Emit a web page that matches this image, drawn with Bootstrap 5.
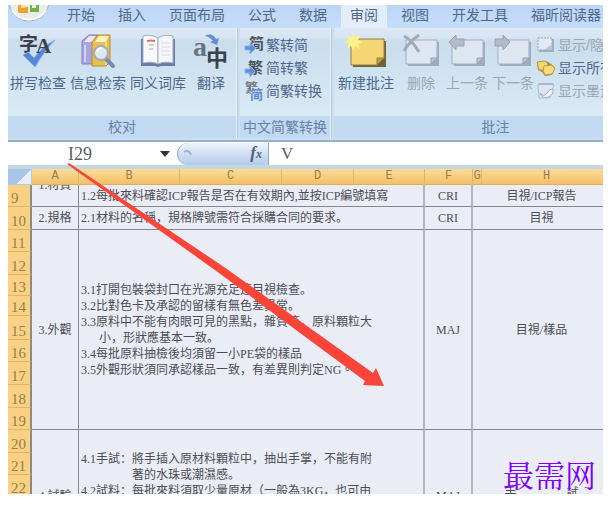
<!DOCTYPE html>
<html lang="zh-CN">
<head>
<meta charset="utf-8">
<meta name="viewport" content="width=device-width, initial-scale=1">
<title>审阅</title>
<link rel="stylesheet" href="https://cdn.jsdelivr.net/npm/bootstrap@5.3.0/dist/css/bootstrap.min.css">
<style>
body { background: #fff; font-family: "Liberation Sans", "Noto Sans CJK SC", sans-serif; font-size: 14px; line-height: 20px; color: #4d678f; }
.page-frame { height: 100vh; padding: 5px 12px 12px 8px; }
.tabbar { background: linear-gradient(#bdd6f5, #c6defa); height: 23px; gap: 5px; }
.tabbar .orb { width: 45px; height: 23px; }
.tabbar .ribbon-tab { color: #4d678f; padding: 0 9px; line-height: 21px; text-decoration: none; height: 23px; border-radius: 3px 3px 0 0; }
.tabbar .ribbon-tab.current { background: #e3eefa; }
.ribbon { background: #cbdff0; padding-bottom: 2px; border-bottom: 2px solid #94b0cf; gap: 3px; }
.tool-group { background: linear-gradient(#dfe9f5 0, #d6e4f2 10px, #c9dded 13px, #d9eaf5 88px); border-right: 1px solid #e9f3fb; box-shadow: 1px 0 0 #b2cae2; }
.tool-body { height: 88px; padding-top: 5px; }
.tool-title { background: #c2daf1; color: #6580a9; height: 22px; line-height: 22px; text-align: center; }
.g-proof { width: 229px; }
.g-convert { width: 91px; }
.g-note { width: 324px; }
.tool { border: 0; padding: 0; background: none; color: #4d678f; width: 60px; display: flex; flex-direction: column; align-items: center; gap: 3px; flex: none; }
.tool.w-s { width: 46px; }
.tool.w-xl { width: 64px; }
.tool-row { border: 0; padding: 0; background: none; color: #4d678f; height: 23px; display: flex; align-items: center; gap: 2px; }
.tool.off, .tool-row.off { color: #9ba6b2; }
.tool svg, .tool-row svg { flex: none; overflow: visible; }
.formula { background: #fff; height: 23px; border-bottom: 0; }
.formula input { border: 0; outline: 0; background: none; padding: 0; font: 18px/22px "Liberation Serif", serif; color: #5b5f66; min-width: 0; }
.formula .cell-name { width: 144px; text-align: center; }
.formula .cell-value { font-size: 17px; padding-left: 12px; }
.formula .drop { border: 0; padding: 0; background: none; width: 25px; line-height: 0; }
.fx { width: 92px; height: 22px; border: 0; border-left: 1px solid #90acd0; border-right: 1px solid #90a9cc; border-radius: 12px 0 0 12px; background: linear-gradient(#eef4fb, #b3cbea); color: #52627e; font: italic bold 17px/20px "Liberation Serif", serif; padding: 0 6px 0 3px; }
.fx small { font-size: 12px; }
.sheet-area { border-top: 4px solid #c3d7dd; background: #eaedf6; }
.sheet { table-layout: fixed; border-collapse: separate; border-spacing: 0; width: calc(100% + 9px); font: 12px/16px "Liberation Serif", "Noto Sans CJK TC", serif; color: #4c4e54; }
.sheet th, .sheet td { padding: 0; }
.c-no { width: 24px; } .c-a { width: 47px; } .c-b { width: 101px; } .c-c { width: 102px; } .c-d { width: 72px; } .c-e { width: 71px; } .c-f { width: 48px; } .c-g { width: 9px; }
.sheet thead th { height: 16px; font: 12px/15px "Liberation Mono", monospace; color: #96804c; text-align: center; background: linear-gradient(#fbdc9b, #f3c067); border-right: 1px solid #dfb566; border-bottom: 1px solid #dcae5c; }
.sheet thead th.corner { background: linear-gradient(135deg, #a9c5ea 62%, #e5eefa 62%); border-color: #b4c8e4; }
.sheet tbody th { background: #fad184; border-bottom: 1px solid #e3b467; border-right: 2px solid #8f8a7c; font: 15px/16px "Liberation Serif", serif; color: #96804c; vertical-align: bottom; padding-left: 3px; }
.h20 { height: 20px; } .h21 { height: 21px; } .h22 { height: 22px; } .h23 { height: 23px; } .h24 { height: 24px; }
.sheet td { background: #eaedf6; border-bottom: 1px solid #858890; border-right: 2px solid #b3b6c0; text-align: center; vertical-align: middle; }
.sheet td.name { border-right: 1px solid #8a8c94; }
.sheet td.body { text-align: left; padding-left: 2px; white-space: nowrap; }
.cut { height: 21px; overflow: hidden; }
.cut div { margin-top: -8px; }
.hang-s { padding-left: 18px; }
.hang-l { padding-left: 51px; }
.sheet td.from-top { vertical-align: top; padding-top: 21px; }
.sheet td.low { vertical-align: top; padding-top: 58px; }
.sheet td.mid { vertical-align: top; padding-top: 55px; }
.wide { gap: 50px; }
.pointer { position: absolute; left: 56px; top: 155px; pointer-events: none; }
.watermark { position: absolute; right: 7px; bottom: 3px; font: 31px/34px "Noto Serif CJK SC", "Noto Sans CJK SC", serif; color: #8000ff; }
</style>
</head>
<body>
<div class="page-frame">
<main class="position-relative d-flex flex-column h-100 overflow-hidden">
  <nav class="tabbar d-flex flex-nowrap text-nowrap overflow-hidden flex-shrink-0">
    <svg class="orb flex-shrink-0" viewBox="0 0 45 23" aria-hidden="true">
      <circle cx="21" cy="-4" r="20" fill="#e9eaec" stroke="#a3b0c2"/>
      <path d="M4 5A20 20 0 0 0 38 5" fill="none" stroke="#fff" stroke-width="2"/>
      <path d="M10-2v8q0 2 2 2h8v-6h-4v-4z" fill="#eda326"/><path d="M22-1h9v8h-9z" fill="#79b23e"/><path d="M24-1h4v4h-4z" fill="#f3f6ec"/><path d="M13-1h4v4h-4z" fill="#fbe09d"/>
    </svg>
    <a class="ribbon-tab" href="#">开始</a>
    <a class="ribbon-tab" href="#">插入</a>
    <a class="ribbon-tab" href="#">页面布局</a>
    <a class="ribbon-tab" href="#">公式</a>
    <a class="ribbon-tab" href="#">数据</a>
    <a class="ribbon-tab current" href="#" aria-current="page">审阅</a>
    <a class="ribbon-tab" href="#">视图</a>
    <a class="ribbon-tab" href="#">开发工具</a>
    <a class="ribbon-tab" href="#">福昕阅读器</a>
  </nav>

  <div class="ribbon d-flex flex-nowrap text-nowrap overflow-hidden flex-shrink-0">
    <section class="tool-group g-proof flex-shrink-0">
      <div class="tool-body d-flex">
        <button class="tool" type="button">
          <svg width="40" height="37" viewBox="0 0 40 37"><text x="1" y="18" font-size="19" font-weight="bold" fill="#3c4148" font-family="Noto Sans CJK SC">字</text><path d="M5 22l5-3 6 6Q24 14 37 7 27 17 17 34z" fill="#5387d8" stroke="#87abe6"/><text x="18" y="20" font-size="21" font-weight="bold" fill="#3c4148" font-family="Liberation Serif">A</text></svg>
          拼写检查</button>
        <button class="tool" type="button">
          <svg width="36" height="37" viewBox="0 0 36 37"><path d="M2 8l7-6h9l-5 7v22H2z" fill="#aaa4e0" stroke="#857fc2"/><path d="M4 9h8l4-6H9z" fill="#e8e7f8"/><path d="M5 12v17" stroke="#d6d2f5" stroke-width="2"/><path d="M12 9l6-7h12v27l-4 4H12z" fill="#e7c04f" stroke="#b58f2d"/><path d="M15 9h11l3-6H19z" fill="#faf0c4"/><path d="M26 9v23" stroke="#f7dd82" stroke-width="2"/><path d="M25 25l8 8" stroke="#7c89ad" stroke-width="4" stroke-linecap="round"/><circle cx="21" cy="20" r="7" fill="#dce9f2" stroke="#a5acb3" stroke-width="2"/><path d="M17 19q1-4 5-4" fill="none" stroke="#fff" stroke-width="2"/></svg>
          信息检索</button>
        <button class="tool" type="button">
          <svg width="36" height="37" viewBox="0 0 36 37"><path d="M1 6h34v27H21l-3 1-3-1H1z" fill="#697ba9"/><path d="M3 3q9-2 15 2v26q-6-3-15-1z" fill="#fafafa" stroke="#a4afc2"/><path d="M33 3q-9-2-15 2v26q6-3 15-1z" fill="#f4f5f8" stroke="#a4afc2"/><path d="M7 8q4-1 8 0" stroke="#dd736f" stroke-width="2" fill="none"/><path d="M9 12h5M9 16h4" stroke="#d99a98"/><path d="M21 10h9M21 14h9M21 18h9M21 22h9" stroke="#d8dce4"/></svg>
          同义词库</button>
        <button class="tool w-s" type="button">
          <svg width="38" height="37" viewBox="0 0 38 37"><text x="1" y="23" font-size="28" font-weight="bold" fill="#687483" font-family="Liberation Serif">a</text><text x="14" y="33" font-size="22" font-weight="bold" fill="#3d434b" font-family="Noto Sans CJK SC">中</text><path d="M13 3q7-4 11 3l3-1-2 7-7-3 3-1q-3-4-8-5z" fill="#628fd0"/></svg>
          翻译</button>
      </div>
      <div class="tool-title">校对</div>
    </section>

    <section class="tool-group g-convert flex-shrink-0">
      <div class="tool-body ps-1">
        <button class="tool-row" type="button"><svg width="20" height="20" viewBox="0 0 20 20"><text x="5" y="14" font-size="15" font-weight="bold" fill="#4e545c" font-family="Noto Sans CJK SC">简</text><path d="M1 11h5V8l6 5-6 6v-4H1z" fill="#5b8fdd" stroke="#8eb0e2"/></svg>繁转简</button>
        <button class="tool-row" type="button"><svg width="20" height="20" viewBox="0 0 20 20"><text x="4" y="15" font-size="15" font-weight="bold" fill="#4e545c" font-family="Noto Sans CJK SC">繁</text><path d="M1 11h5V8l5 5-5 6v-4H1z" fill="#5b8fdd" stroke="#8eb0e2"/></svg>简转繁</button>
        <button class="tool-row" type="button"><svg width="20" height="20" viewBox="0 0 20 20"><text x="1" y="11" font-size="13" font-weight="bold" fill="#787d84" font-family="Noto Sans CJK SC">繁</text><path d="M7 6h13v14H7z" fill="#d3e2f1"/><text x="6" y="18" font-size="13" font-weight="bold" fill="#5f88cc" font-family="Noto Sans CJK SC">简</text></svg>简繁转换</button>
      </div>
      <div class="tool-title">中文简繁转换</div>
    </section>

    <section class="tool-group g-note flex-shrink-0">
      <div class="tool-body d-flex">
        <button class="tool w-xl" type="button">
          <svg width="40" height="37" viewBox="0 0 40 37"><path d="M7 8h33v26H7z" fill="#6e6437"/><path d="M5 6h33v19l-7 7H5z" fill="#f6d673" stroke="#8f7f3b"/><path d="M31 32v-7h7z" fill="#c99f3c" stroke="#8f7f3b"/><path d="M7 0l2 5 5-3-2 5 5 2-5 2 2 5-5-3-2 5-2-5-5 3 3-5-5-2 5-2-3-5 5 3z" fill="#fbf28a"/></svg>
          新建批注</button>
        <button class="tool off w-s" type="button">
          <svg width="38" height="37" viewBox="0 0 38 37"><path d="M6 9h31v24H6z" fill="#a0acbe"/><path d="M4 7h31v18l-6 6H4z" fill="#dde6f1" stroke="#a3afc1"/><path d="M29 31v-6h6z" fill="#bbc6d5" stroke="#94a1b5"/><path d="M2 3q8 4 15 16M17 2Q7 9 2 18" stroke="#a2aab5" stroke-width="3" fill="none"/></svg>
          删除</button>
        <button class="tool off w-s" type="button">
          <svg width="38" height="37" viewBox="0 0 38 37"><path d="M6 9h31v24H6z" fill="#a0acbe"/><path d="M4 7h31v18l-6 6H4z" fill="#dde6f1" stroke="#a3afc1"/><path d="M29 31v-6h6z" fill="#bbc6d5" stroke="#94a1b5"/><path d="M1 9l7-7v4h8v7H8v4z" fill="#b3bbc6" stroke="#98a3b1"/></svg>
          上一条</button>
        <button class="tool off w-s" type="button">
          <svg width="38" height="37" viewBox="0 0 38 37"><path d="M6 9h31v24H6z" fill="#a0acbe"/><path d="M4 7h31v18l-6 6H4z" fill="#dde6f1" stroke="#a3afc1"/><path d="M29 31v-6h6z" fill="#bbc6d5" stroke="#94a1b5"/><path d="M16 9L9 2v4H1v7h8v4z" fill="#b3bbc6" stroke="#98a3b1"/></svg>
          下一条</button>
        <div>
          <button class="tool-row off" type="button"><svg width="20" height="20" viewBox="0 0 20 20"><path d="M3 4h15v13H3z" fill="#a4b0c2"/><path d="M2 3h14v12H2z" fill="#e2eaf3" stroke="#99a6b9" stroke-dasharray="2 1"/><path d="M16 9v6H8z" fill="#bac5d4"/></svg>显示/隐藏</button>
          <button class="tool-row" type="button"><svg width="20" height="20" viewBox="0 0 20 20"><path d="M1 5l9-2 5 3 4 4-3 7-7 1-3-4-4-2z" fill="#a88b3b"/><path d="M1 4l8-1 3 3-2 6-7 0z" fill="#f4d872" stroke="#b8983c"/><path d="M8 8l8-1 3 4-3 5-7 1-2-4z" fill="#f6dc7a" stroke="#b8983c"/></svg>显示所有</button>
          <button class="tool-row off" type="button"><svg width="20" height="20" viewBox="0 0 20 20"><path d="M2 3h16L14 17H3z" fill="#dce6f1" stroke="#b0bccb"/><path d="M3 3h14" stroke="#a9b5c5" stroke-width="2"/><path d="M4 12q4 5 7 0t6-4q1 6-5 8t-8-4z" fill="#f2f6fa" stroke="#a3afbf"/></svg>显示墨迹</button>
        </div>
      </div>
      <div class="tool-title">批注</div>
    </section>
  </div>

  <div class="formula d-flex align-items-center flex-shrink-0">
    <input class="cell-name" type="text" value="I29" aria-label="名称框">
    <button class="drop" type="button" aria-label="名称列表"><svg width="10" height="6" viewBox="0 0 10 6"><path d="M0 0h10L5 6z" fill="#333"/></svg></button>
    <button class="fx d-flex align-items-center justify-content-between" type="button" aria-label="插入函数"><svg width="14" height="14" viewBox="0 0 14 14"><path d="M3 5q5-3 7 3" fill="none" stroke="#9fb4d2" stroke-width="2"/></svg><span>f<small>x</small></span></button>
    <input class="cell-value flex-grow-1" type="text" value="V" aria-label="编辑栏">
  </div>

  <div class="sheet-area flex-grow-1 overflow-hidden">
    <table class="sheet">
      <colgroup><col class="c-no"><col class="c-a"><col class="c-b"><col class="c-c"><col class="c-d"><col class="c-e"><col class="c-f"><col class="c-g"><col></colgroup>
      <thead><tr><th class="corner"></th><th>A</th><th>B</th><th>C</th><th>D</th><th>E</th><th>F</th><th>G</th><th>H</th></tr></thead>
      <tbody>
        <tr><th class="h22">9</th><td class="name"><div class="cut"><div>1.材質</div></div></td><td class="body" colspan="4">1.2每批來料確認ICP報告是否在有效期內,並按ICP編號填寫</td><td>CRI</td><td colspan="2">目視/ICP報告</td></tr>
        <tr><th class="h23">10</th><td class="name">2.規格</td><td class="body" colspan="4">2.1材料的名稱，規格牌號需符合採購合同的要求。</td><td>CRI</td><td colspan="2">目視</td></tr>
        <tr><th class="h22">11</th><td class="name" rowspan="9">3.外觀</td>
          <td class="body" rowspan="9" colspan="4">
            <div>3.1打開包裝袋封口在光源充足這目視檢查。</div>
            <div>3.2比對色卡及承認的留樣有無色差異常。</div>
            <div>3.3原料中不能有肉眼可見的黑點，雜質等，原料顆粒大</div>
            <div class="hang-s">小，形狀應基本一致。</div>
            <div>3.4每批原料抽檢後均須留一小PE袋的樣品</div>
            <div>3.5外觀形狀須同承認樣品一致，有差異則判定NG。</div>
          </td>
          <td rowspan="9">MAJ</td><td rowspan="9" colspan="2">目視/樣品</td></tr>
        <tr><th class="h23">12</th></tr>
        <tr><th class="h21">13</th></tr>
        <tr><th class="h20">14</th></tr>
        <tr><th class="h24">15</th></tr>
        <tr><th class="h22">16</th></tr>
        <tr><th class="h23">17</th></tr>
        <tr><th class="h23">18</th></tr>
        <tr><th class="h22">19</th></tr>
        <tr><th class="h23">20</th><td class="name low" rowspan="4">4.試驗</td>
          <td class="body from-top" rowspan="4" colspan="4">
            <div>4.1手試：將手插入原材料顆粒中，抽出手掌，不能有附</div>
            <div class="hang-l">著的水珠或潮濕感。</div>
            <div>4.2試料：每批來料須取少量原材（一般為3KG，也可由</div>
          </td>
          <td class="low" rowspan="4">MAJ</td><td class="mid" rowspan="4" colspan="2"><div class="d-flex justify-content-center wide"><span>手</span><span>試</span></div></td></tr>
        <tr><th class="h22">21</th></tr>
        <tr><th class="h22">22</th></tr>
        <tr><th class="h22">23</th></tr>
      </tbody>
    </table>
  </div>

  <svg class="pointer" width="330" height="236" viewBox="0 0 330 236" aria-hidden="true"><path d="M3 4L5 3 160 107 309 213 312 208 320 226 299 225 301 221 155 113z" fill="#fb4539"/></svg>
  <div class="watermark">最需网</div>
</main>
</div>
<script src="https://cdn.jsdelivr.net/npm/bootstrap@5.3.0/dist/js/bootstrap.bundle.min.js"></script>
</body>
</html>
